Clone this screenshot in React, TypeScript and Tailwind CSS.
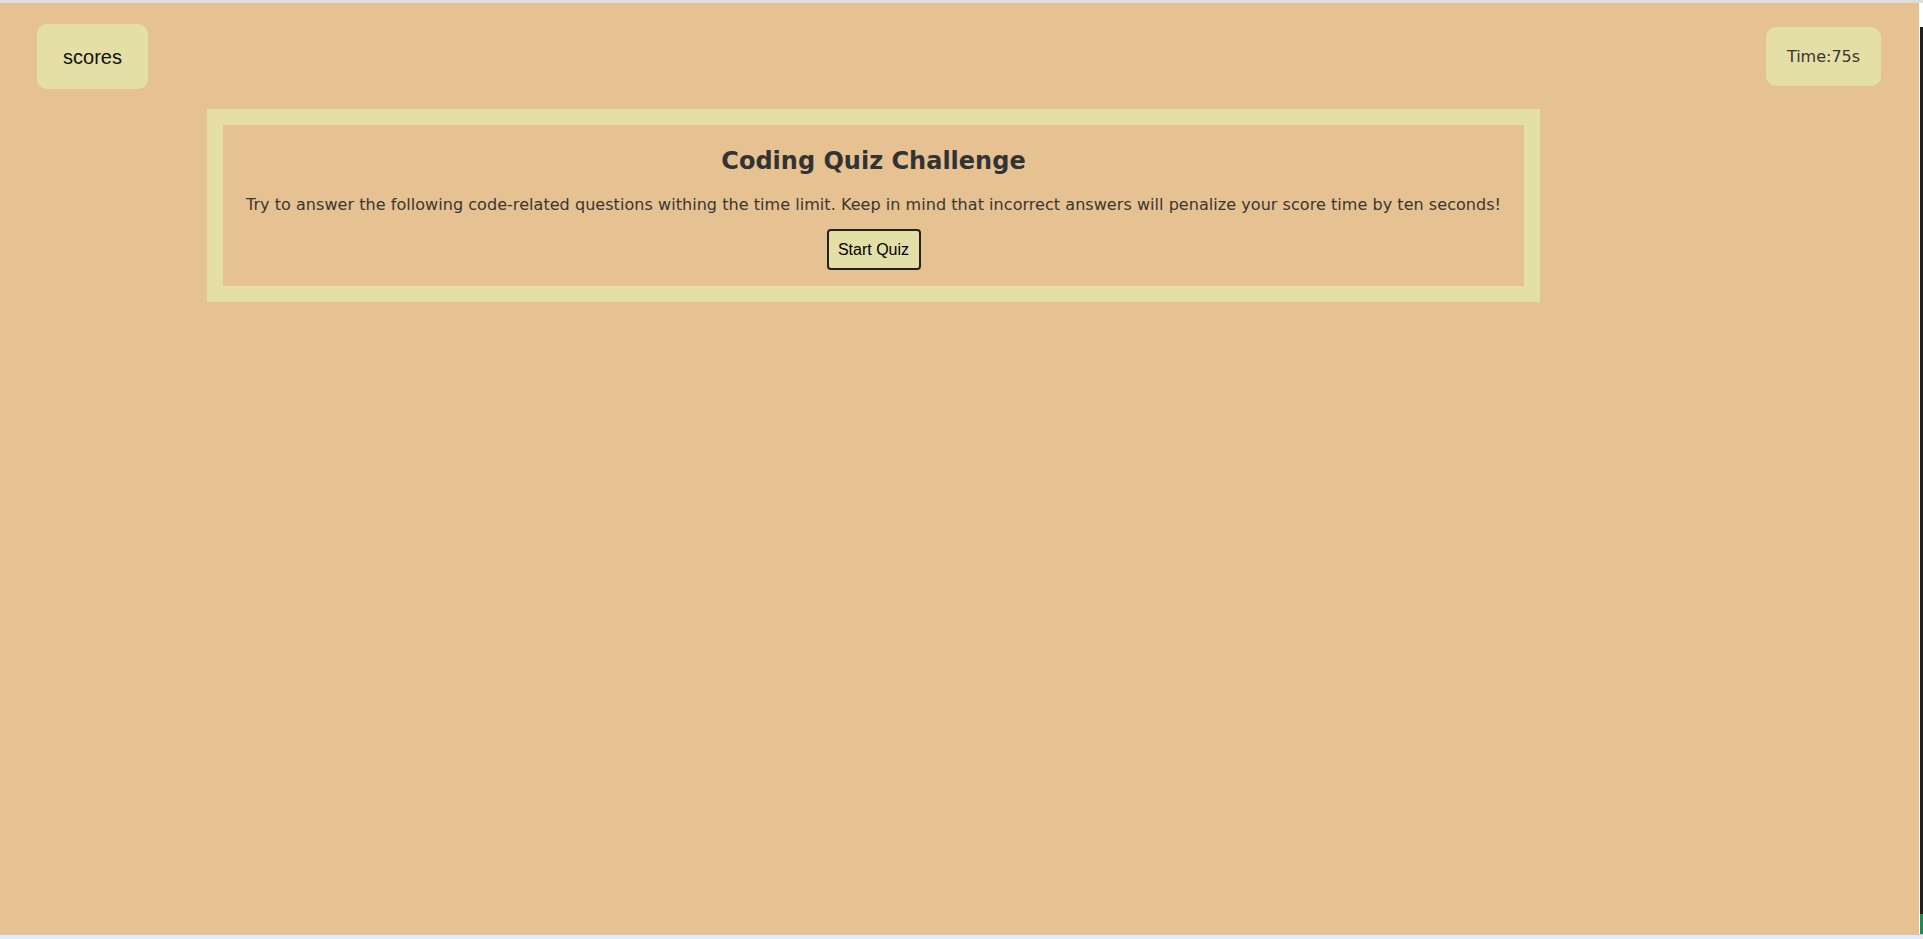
// App.tsx
const App = () => {
  return (
    <div className="w-[1923px] h-[939px] flex flex-col overflow-hidden bg-white">
      <div className="h-[3px] bg-[#dedede]" />
      <div className="flex flex-1">
        <main className="w-[1919px] h-[931px] bg-[#e6c192] text-[#333] font-['DejaVu_Sans',Verdana,sans-serif]">
          <header className="flex justify-between items-start pt-[21px] pl-[37px] pr-[38px]">
            <button className="w-[111px] h-[65px] rounded-[10px] bg-[#e4dfa6] text-[20px] text-[#111] font-['Liberation_Sans',Arial,sans-serif]">
              scores
            </button>
            <div className="mt-[3px] w-[115px] h-[59px] rounded-[10px] bg-[#e4dfa6] flex items-center justify-center text-[16px] text-[#3a3630]">
              Time:75s
            </div>
          </header>

          <section className="mt-[20px] ml-[207px] w-[1333px] border-[16px] border-[#e4dfa6] flex flex-col items-center pt-[22px] pb-[16px]">
            <h2 className="text-[24px] leading-[28px] font-bold">Coding Quiz Challenge</h2>
            <p className="mt-[20px] text-[16px] leading-[19px] tracking-[0.05px] text-[#3a3630]">
              Try to answer the following code-related questions withing the time limit. Keep in mind that incorrect answers will penalize your score time by ten seconds!
            </p>
            <button className="mt-[15px] w-[94px] h-[41px] border-2 border-[#222] rounded-[4px] bg-[#e4dfa6] text-[16px] text-black font-['Liberation_Sans',Arial,sans-serif]">
              Start Quiz
            </button>
          </section>
        </main>
        <div className="flex">
          <div className="w-px bg-white" />
          <div className="w-[3px] flex flex-col">
            <div className="h-[24px] bg-white" />
            <div className="flex-1 bg-[#202020]" />
            <div className="h-[20px] bg-[#1f8a5c]" />
          </div>
        </div>
      </div>
      <div className="h-px bg-[#c8c8c8]" />
      <div className="h-[4px] bg-[#e6ecf6]" />
    </div>
  );
};

export default App;
